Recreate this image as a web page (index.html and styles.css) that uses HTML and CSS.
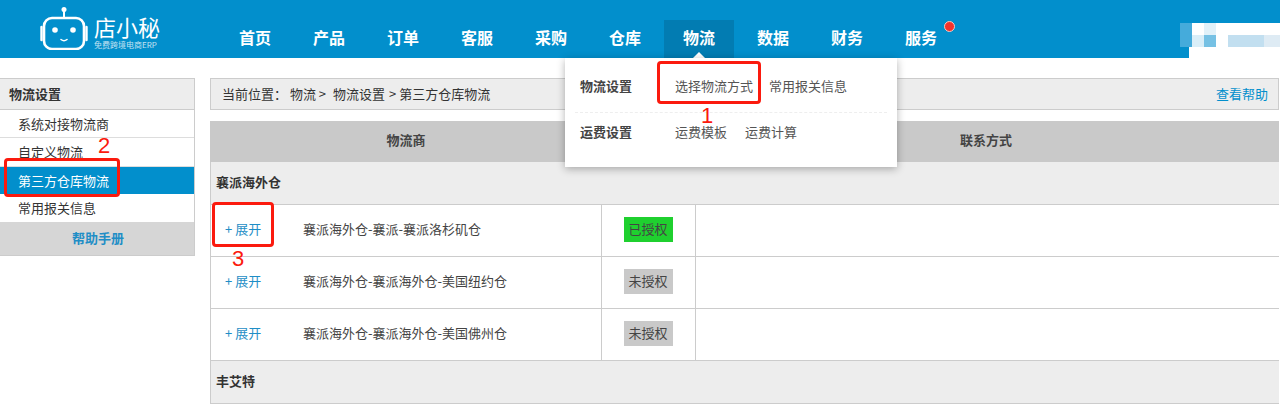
FILE: index.html
```html
<!DOCTYPE html>
<html lang="zh">
<head>
<meta charset="utf-8">
<title>第三方仓库物流</title>
<link rel="stylesheet" href="styles.css">
</head>
<body>
<header class="topbar">
  <a class="logo">
    <svg class="logo-icon" width="48" height="44" viewBox="0 0 48 44" fill="none" stroke="#fff">
      <circle cx="24" cy="3.5" r="2.5" fill="#fff" stroke="none"/>
      <path d="M24 5v7" stroke-width="2"/>
      <rect x="4" y="12" width="40" height="31" rx="8" stroke-width="2.6"/>
      <path d="M1.5 21v13M46.5 21v13" stroke-width="2.4" stroke-linecap="round"/>
      <circle cx="15" cy="24" r="2.8" fill="#fff" stroke="none"/>
      <circle cx="33" cy="24" r="2.8" fill="#fff" stroke="none"/>
      <path d="M21 33.500q3 2.500 6 0" stroke-width="1.600" stroke-linecap="round"/>
    </svg>
    <span class="logo-text">
      <span class="logo-name">店小秘</span>
      <span class="logo-sub">免费跨境电商ERP</span>
    </span>
  </a>
  <nav class="nav">
    <a class="nav-item">首页</a>
    <a class="nav-item">产品</a>
    <a class="nav-item">订单</a>
    <a class="nav-item">客服</a>
    <a class="nav-item">采购</a>
    <a class="nav-item">仓库</a>
    <a class="nav-item active">物流</a>
    <a class="nav-item">数据</a>
    <a class="nav-item">财务</a>
    <a class="nav-item dot">服务</a>
  </nav>
  <svg class="mosaic" width="100" height="35" viewBox="0 0 100 35">
    <path d="M12 0H100V35H9V24H12Z" fill="#fff"/>
    <rect x="0" width="12" height="24" fill="#45abdb"/>
    <rect x="12" y="12" width="12" height="12" fill="#d9eef8"/>
    <rect x="24" width="12" height="12" fill="#e1f1f9"/>
    <rect x="24" y="12" width="12" height="12" fill="#76c1e4"/>
    <rect x="48" y="12" width="36" height="12" fill="#c2dff0"/>
    <rect x="84" y="12" width="16" height="12" fill="#deebf4"/>
  </svg>
</header>

<div class="page">
  <aside class="side">
    <h3 class="side-title">物流设置</h3>
    <a class="side-link">系统对接物流商</a>
    <a class="side-link tall">自定义物流</a>
    <a class="side-link current">第三方仓库物流</a>
    <a class="side-link last">常用报关信息</a>
    <a class="side-help">帮助手册</a>
  </aside>

  <main class="main">
    <div class="crumb">
      <span class="crumb-path">当前位置：&nbsp;物流 &gt;<span class="sep"></span>物流设置<span class="sep-small"></span>&gt; 第三方仓库物流</span>
      <a class="crumb-help">查看帮助</a>
    </div>
    <div class="table">
      <div class="thead">
        <div class="th-left">物流商</div>
        <div class="th-mid"></div>
        <div class="th-right">联系方式</div>
      </div>
      <div class="group">襄派海外仓</div>
      <div class="row">
        <div class="cell-name"><a class="expand">+ 展开</a><span class="wh">襄派海外仓-襄派-襄派洛杉矶仓</span></div>
        <div class="cell-status"><span class="tag ok">已授权</span></div>
        <div class="cell-contact"></div>
      </div>
      <div class="row">
        <div class="cell-name"><a class="expand">+ 展开</a><span class="wh">襄派海外仓-襄派海外仓-美国纽约仓</span></div>
        <div class="cell-status"><span class="tag">未授权</span></div>
        <div class="cell-contact"></div>
      </div>
      <div class="row">
        <div class="cell-name"><a class="expand">+ 展开</a><span class="wh">襄派海外仓-襄派海外仓-美国佛州仓</span></div>
        <div class="cell-status"><span class="tag">未授权</span></div>
        <div class="cell-contact"></div>
      </div>
      <div class="group">丰艾特</div>
    </div>
  </main>
</div>

<div class="menu">
  <div class="menu-row">
    <b class="menu-title">物流设置</b>
    <a class="menu-link">选择物流方式</a>
    <a class="menu-link">常用报关信息</a>
  </div>
  <div class="menu-row second">
    <b class="menu-title">运费设置</b>
    <a class="menu-link">运费模板</a>
    <a class="menu-link">运费计算</a>
  </div>
</div>

<div class="mark mark-1"></div>
<div class="mark mark-2"></div>
<div class="mark mark-3"></div>
<span class="num num-1">1</span>
<span class="num num-2">2</span>
<span class="num num-3">3</span>
</body>
</html>
```
FILE: styles.css
```css
* { box-sizing: border-box; }
html, body { margin: 0; padding: 0; }
body {
  height: 405px;
  overflow: hidden;
  position: relative;
  background: #fff;
  color: #333;
  font: 13px/1.4 "Microsoft YaHei", "Noto Sans CJK SC", "Liberation Sans", sans-serif;
}
a { color: inherit; text-decoration: none; }

.topbar {
  height: 58px;
  background: #028fcc;
  display: flex;
  position: relative;
}
.logo {
  width: 224px;
  padding: 6px 0 0 40px;
  display: flex;
  align-items: flex-start;
  color: #fff;
}
.logo-text { display: flex; flex-direction: column; margin-left: 6px; padding-top: 8px; }
.logo-name { font-size: 22px; line-height: 24px; font-weight: 400; }
.logo-sub { font-size: 8px; line-height: 10px; margin-top: 2px; opacity: .75; white-space: nowrap; }

.nav { display: flex; gap: 4px; padding-top: 20px; margin-left: -4px; }
.nav-item {
  width: 70px;
  height: 38px;
  line-height: 35px;
  text-align: center;
  color: #fff;
  font-size: 16px;
  font-weight: 700;
  position: relative;
}
.nav-item.active { background: #027cb2; }
.nav-item.active::after {
  content: "";
  position: absolute;
  left: 29px;
  bottom: 0;
  border: 6px solid transparent;
  border-top: 0;
  border-bottom-color: #fff;
}
.nav-item.dot::after {
  content: "";
  position: absolute;
  left: 58px;
  top: 1px;
  width: 9px;
  height: 9px;
  border-radius: 50%;
  background: #f5312b;
  border: 1px solid #f7c9c0;
}
.mosaic { position: absolute; left: 1180px; top: 23px; }

.page { display: flex; padding-top: 20px; align-items: flex-start; }
.side {
  width: 195px;
  border: 1px solid #ccc;
  border-left: 0;
  flex: none;
}
.side-title {
  margin: 0;
  height: 31px;
  line-height: 29px;
  padding-left: 9px;
  font-size: 13px;
  font-weight: 700;
  background: #ededed;
  border-bottom: 1px solid #ccc;
}
.side-link {
  display: block;
  height: 28px;
  line-height: 27px;
  padding-left: 18px;
  border-bottom: 1px solid #ddd;
}
.side-link.tall { height: 29px; }
.side-link.current { height: 27px; background: #028fcc; color: #fff; border-bottom: 0; }
.side-link.last { border-bottom: 0; }
.side-help {
  display: block;
  height: 33px;
  line-height: 32px;
  padding-left: 2px;
  text-align: center;
  font-weight: 700;
  color: #1f8ec6;
  background: #d6d6d6;
}

.main { margin-left: 15px; width: 1069px; flex: none; }
.crumb {
  height: 32px;
  border: 1px solid #ccc;
  background: #ededed;
  display: flex;
  justify-content: space-between;
  align-items: center;
  padding: 0 10px 0 11px;
  margin-bottom: 11px;
}
.sep { display: inline-block; width: 7px; }
.sep-small { display: inline-block; width: 4px; }
.crumb-help { color: #028fcc; }

.table { border-left: 1px solid #ccc; }
.thead {
  display: flex;
  height: 41px;
  background: #c9c9c9;
  font-weight: 700;
  color: #444;
  margin-left: -1px;
  line-height: 37px;
  text-align: center;
}
.th-left { width: 392px; }
.th-mid { width: 93px; }
.th-right { flex: 1; padding-right: 2px; }
.group {
  height: 43px;
  line-height: 40px;
  padding-left: 5px;
  background: #ededed;
  font-weight: 700;
  border-bottom: 1px solid #ccc;
}
.row { display: flex; height: 52px; border-bottom: 1px solid #ccc; }
.cell-name { width: 390px; display: flex; align-items: center; padding: 0 0 2px 14px; }
.expand { width: 78px; color: #1f8ec6; }
.wh { color: #444; }
.cell-status {
  width: 95px;
  border-left: 1px solid #ccc;
  border-right: 1px solid #ccc;
  display: flex;
  justify-content: center;
  align-items: center;
  padding: 0 1px 2px 0;
}
.cell-contact { flex: 1; }
.tag {
  width: 49px;
  height: 25px;
  line-height: 24px;
  text-align: center;
  background: #c9c9c9;
  color: #444;
}
.tag.ok { background: #1fd02f; }

.menu {
  position: absolute;
  left: 565px;
  top: 58px;
  width: 332px;
  height: 109px;
  background: #fff;
  box-shadow: 0 2px 8px rgba(0,0,0,.3);
  padding: 0 10px;
}
.menu-row {
  height: 55px;
  display: flex;
  align-items: center;
  gap: 17px;
  padding: 3px 0 0 5px;
  border-bottom: 1px dashed #eee;
  color: #555;
}
.menu-row .menu-link + .menu-link { margin-left: -1px; }
.menu-row.second { border-bottom: 0; height: 38px; padding: 0 0 0 5px; }
.menu-row.second .menu-link + .menu-link { margin-left: 1px; }
.menu-title { width: 78px; color: #444; }

.mark {
  position: absolute;
  border: 3px solid #fb1a0e;
  border-radius: 4px;
}
.mark-1 { left: 657px; top: 61px; width: 104px; height: 43px; }
.mark-2 { left: 4px; top: 158px; width: 116px; height: 39px; }
.mark-3 { left: 212px; top: 202px; width: 62px; height: 45px; }
.num {
  position: absolute;
  color: #fb1a0e;
  font-size: 22px;
  line-height: 18px;
  font-family: "Liberation Sans", sans-serif;
}
.num-1 { left: 701px; top: 107px; }
.num-2 { left: 98px; top: 137px; }
.num-3 { left: 232px; top: 250px; }
```
